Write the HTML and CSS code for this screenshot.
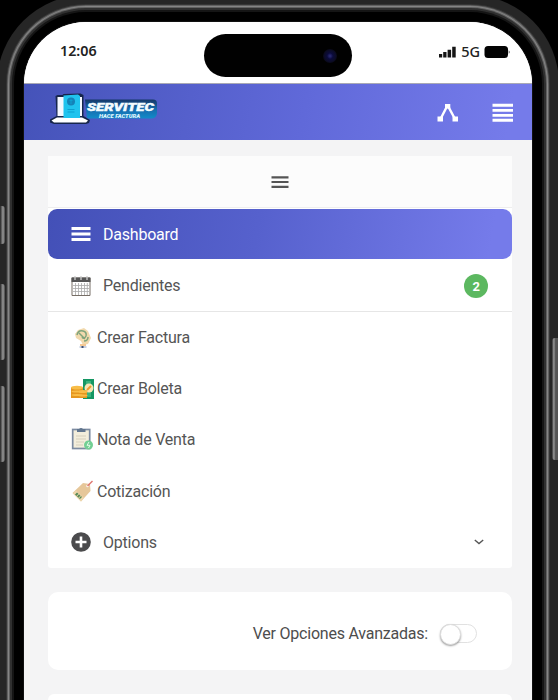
FILE: index.html
```html
<!DOCTYPE html>
<html lang="es">
<head>
<meta charset="utf-8">
<title>Servitec</title>
<link rel="stylesheet" href="styles.css">
</head>
<body>
<i class="key key-action"></i><i class="key key-up"></i><i class="key key-down"></i><i class="key key-power"></i>
<div class="screen">
  <div class="status">
    <span class="time">12:06</span>
    <div class="island"><i class="lens"></i></div>
    <div class="signal">
      <svg width="18" height="12" viewBox="0 0 18 12"><path d="M0 8h3.200v3.500H0zM4.200 6h3.300v5.500H4.200zM8.600 3.800h3.500v7.700H8.600zM13.200.8h3.500v10.700h-3.500z" fill="#151515"/></svg>
      <span class="net">5G</span>
      <svg width="27" height="14" viewBox="0 0 27 14"><rect x=".5" y="1" width="23.500" height="12" rx="3.500" fill="#030303"/><path d="M24.700 5.200q2 1.800 0 3.600z" fill="#444"/></svg>
    </div>
  </div>
  <header class="bar">
    <svg class="logo" width="112" height="36" viewBox="0 0 112 36">
      <defs><linearGradient id="plate" x1="0" y1="0" x2="0" y2="1"><stop offset="0" stop-color="#153768"/><stop offset=".5" stop-color="#176bad"/><stop offset="1" stop-color="#128bc9"/></linearGradient></defs>
      <path d="M34 8.500h68q4 0 4 4v9q0 6-6 6H36z" fill="url(#plate)"/>
      <path d="M4.500 5l2-1h5l1-1 17-.5 3 1.500V25l6.500 4-1 3-3 1H3l-4-1.500v-3L5.500 25z" fill="#17264c"/>
      <path d="M6.500 6H31v19H6.500z" fill="#f5f8ff"/>
      <path d="M.5 29.500L6 26.500h25l6 3-2 2H3z" fill="#fff"/>
      <path d="M12.500 4.500L27 3.500l2 1.500v22H12.500z" fill="#20c3ee"/>
      <circle cx="20" cy="10.500" r="4" fill="#1583b8"/><path d="M20 8v5M18.500 9.500h3M16.500 18.500h7M16.500 21h7" stroke="#0d9fd0" fill="none"/>
      <text class="brand" x="36" y="19.500" textLength="67" lengthAdjust="spacingAndGlyphs">SERVITEC</text>
      <text class="tag" x="48" y="27" textLength="41" lengthAdjust="spacingAndGlyphs">HACE FACTURA</text>
    </svg>
    <div class="tools">
      <svg width="24" height="22" viewBox="0 0 24 22"><path d="M4.500 17l6.200-12h1.800l6.500 12" fill="none" stroke="#fff" stroke-width="2.400"/><path d="M9 2h5.300v4.500H9zM1.500 14.500H7v5H1.500zM16.500 14.500H22v5h-5.500z" fill="#fff"/></svg>
      <svg width="22" height="22" viewBox="0 0 22 22"><path d="M.5 3.200h20.500M.5 8.400h20.500M.5 13.400h20.500M.5 18.300h20.500" stroke="#fff" stroke-width="2.900"/></svg>
    </div>
  </header>
  <main class="page">
    <nav class="menu">
      <div class="toggle"><svg width="18" height="14" viewBox="0 0 18 14"><path d="M.5 2.300h17M.5 7h17M.5 11.800h17" stroke="#555" stroke-width="2.200"/></svg></div>
      <a class="item active"><span class="ico"><svg width="20" height="16" viewBox="0 0 20 16"><path d="M.5 2.500h19M.5 8h19M.5 13.500h19" stroke="#fff" stroke-width="2.900"/></svg></span><span class="label wide">Dashboard</span></a>
      <a class="item pending"><span class="ico"><svg width="20" height="20" viewBox="0 0 20 20"><path d="M1 2h18v17.500H1z" fill="#fff" stroke="#776e66"/><path d="M.5 1.500h19V6H.5z" fill="#555"/><path d="M2 9.500h16M2 12.500h16M2 15.500h16M4.500 7v12M7.500 7v12M10.500 7v12M13.500 7v12M16.300 7v12" stroke="#aaa" stroke-width=".8"/><path d="M4 0v4M10 0v4M16 0v4" stroke="#ccc" stroke-width="1.300"/></svg></span><span class="label wide">Pendientes</span><b class="badge">2</b></a>
      <a class="item"><span class="ico"><svg width="22" height="22" viewBox="0 0 22 22"><path d="M4 7l3-4 6-2 4 3 3 7-3 6-5 1-2-4-5-3z" fill="#f1d9ad"/><path d="M6 8q1-5 6-4 4 1 3 5-2 4-4 1M8 6l6 6M13 14q4 0 4-4" fill="none" stroke="#7fa47c" stroke-width="1.500"/><path d="M9 17h6v2H9z" fill="#f6c994"/><path d="M8.500 19h7v2h-7z" fill="#c7d0e2"/><path d="M10.500 19h2v2h-2z" fill="#405070"/></svg></span><span class="label">Crear Factura</span></a>
      <a class="item"><span class="ico"><svg width="24" height="22" viewBox="0 0 24 22"><path d="M12 1h11v20H12z" fill="#159763"/><path d="M15 3h5v16h-5z" fill="#3bb27e"/><circle cx="18" cy="10" r="4.500" fill="#f6e5b5"/><path d="M16 12l4-4" stroke="#ef9c32" stroke-width="2"/><path d="M0 9.500h12v10.500H0zM9 12.500h7V20H9z" fill="#e5961f"/><g fill="#f8bd48"><ellipse cx="6" cy="9.700" rx="6" ry="1.900"/><ellipse cx="6" cy="13.500" rx="5.500" ry="1"/><ellipse cx="6" cy="17" rx="5.500" ry="1"/><ellipse cx="12" cy="13.500" rx="4.500" ry="1.500"/><ellipse cx="12" cy="17.500" rx="4.500" ry="1"/></g></svg></span><span class="label">Crear Boleta</span></a>
      <a class="item nota"><span class="ico"><svg width="23" height="24" viewBox="0 0 23 24"><rect x="1.700" y="2.500" width="17" height="19" fill="#f2eddb" stroke="#7c8ba1" stroke-width="1.700"/><path d="M6 2h2q2-2 4 0h2.500v3H6z" fill="#60758e"/><path d="M5 9h10M5 12h10M5 15h8M5 18h7" stroke="#d5cfbc"/><circle cx="17.500" cy="18" r="4.500" fill="#73cf94"/><path d="M18 15l-2 3.300h3L17.500 21" fill="none" stroke="#e5fbe9"/></svg></span><span class="label">Nota de Venta</span></a>
      <a class="item"><span class="ico"><svg width="23" height="23" viewBox="0 0 23 23"><path d="M1.500 13L12 3l7 1 .5 7L10 21.500z" fill="#e6c79a"/><path d="M2 13.500l3-3 8 7.500-3 3.500z" fill="#edd6ac"/><path d="M5 13.500l5 4.500" stroke="#588a57" stroke-width="3" stroke-dasharray="2 .7"/><circle cx="16.500" cy="6" r="1.200" fill="#fff"/><path d="M16.500 6l5-5" stroke="#df7771" stroke-width="1.500"/></svg></span><span class="label">Cotización</span></a>
      <a class="item options"><span class="ico"><svg width="20" height="20" viewBox="0 0 20 20"><circle cx="10" cy="10" r="9.800" fill="#4b4b4d"/><path d="M10 4.500v11M4.500 10h11" stroke="#fff" stroke-width="2.600"/></svg></span><span class="label wide">Options</span><svg class="chev" width="10" height="8" viewBox="0 0 10 8"><path d="M.8 2L5 5.500 9.200 2" fill="none" stroke="#555" stroke-width="1.400"/></svg></a>
    </nav>
    <section class="card advanced"><span>Ver Opciones Avanzadas:</span><i class="switch"></i></section>
    <section class="card next"></section>
  </main>
</div>
</body>
</html>
```
FILE: styles.css
```css
* { box-sizing: border-box; }
html, body { height: 700px; overflow: hidden; }
body { margin: 0; padding-top: 22px; background: #000; font-family: Roboto, "Liberation Sans", sans-serif; position: relative; }
.screen {
  width: 508px; height: 678px; margin-left: 24px; border-radius: 62px 62px 0 0; background: #f4f4f5;
  box-shadow: 0 0 0 1px #111, 0 0 0 10px #000, 0 0 0 12px #151515, 0 0 0 14px #303030, 0 0 0 15px #606060, 0 0 0 16px #858585, 0 0 0 17px #606060, 0 0 0 18px #353535, 0 0 0 27px #262626;
  overflow: hidden;
}
body::before { content: ""; position: absolute; z-index: -1; inset: 80px 0 0; background: #242424; }
.key { position: absolute; width: 5px; left: 0; background: linear-gradient(90deg, #222, #999 60%, #444); border-radius: 0 3px 3px 0; }
.key-action { top: 206px; height: 38px; }
.key-up { top: 284px; height: 76px; }
.key-down { top: 386px; height: 76px; }
.key-power { top: 338px; height: 122px; left: 552px; width: 6px; background: linear-gradient(90deg, #333, #999 30%, #555 60%); border-radius: 3px 0 0 3px; }

.status { height: 62px; background: #fff; border-bottom: 1px solid #a9a9b5; display: flex; justify-content: space-between; padding: 0 21px 0 36px; align-items: flex-start; }
.time { font: 600 14.300px/18px "Noto Sans", sans-serif; color: #222; width: 144px; padding-top: 20px; }
.island { width: 148px; height: 43px; margin-top: 12px; border-radius: 22px; background: #010101; display: flex; align-items: center; justify-content: flex-end; padding-right: 15px; }
.lens { width: 14px; height: 14px; border-radius: 50%; background: radial-gradient(circle, #25256a 0 8%, #0b0b3c 30%, #0c0c28 55%, #060608 85%); }
.signal { width: 159px; display: flex; justify-content: flex-end; align-items: center; padding-top: 20px; height: 39px; }
.net { font: 500 14.500px/18px "Noto Sans", sans-serif; color: #222; margin: -2px 4px 0 4px; }

.bar { height: 56px; background: linear-gradient(100deg, #4553b9, #6069d9 55%, #757bea 95%); display: flex; justify-content: space-between; align-items: flex-start; padding: 7px 18px 0 27px; }
.logo { overflow: visible; }
.brand { font: italic 900 11px Roboto, sans-serif; fill: #f4fcff; stroke: #f4fcff; stroke-width: .4; }
.tag { font: italic 900 4.500px Roboto, sans-serif; fill: #e4f8ff; }
.tools { display: flex; gap: 32px; padding-top: 11px; }

.page { padding: 16px 20px 0 24px; }
.menu { background: #fff; height: 412px; border-radius: 3px; }
.toggle { height: 52px; background: #fcfcfc; border-bottom: 1px solid #eee; display: flex; align-items: center; justify-content: center; }
.item { height: 51.300px; display: flex; align-items: center; padding: 0 23px; color: #555; font-size: 16px; letter-spacing: -.22px; }
.ico { width: 26px; display: flex; }
.wide { margin-left: 6px; }
.active { height: 50px; margin-top: 1px; color: #fff; border-radius: 9px; background: linear-gradient(100deg, #4350b7, #5661cd 45%, #757bea 95%); }
.pending { height: 53px; padding-top: 1px; border-bottom: 1px solid #e6e6e6; }
.nota { padding-bottom: 2px; }
.options { padding-bottom: 1px; }
.badge { margin-left: auto; margin-right: 1px; width: 24px; height: 24px; border-radius: 50%; background: #5cb860; color: #fff; font-size: 13px; line-height: 25px; text-align: center; }
.chev { margin-left: auto; margin-right: 5px; }
.card { background: #fff; border-radius: 10px; }
.advanced { height: 78px; margin-top: 24px; display: flex; align-items: center; justify-content: flex-end; gap: 12px; padding: 5px 35px 0 0; color: #4d4d4d; font-size: 16px; letter-spacing: -.22px; }
.switch { width: 37px; height: 19px; border: 1px solid #e1e1e1; border-radius: 10px; display: block; }
.switch::before { content: ""; display: block; width: 19px; height: 19px; margin: -1px; border-radius: 50%; background: #fff; border: 1px solid #ddd; box-shadow: 0 1px 2px #999; }
.next { height: 6px; margin-top: 24px; border-radius: 10px 10px 0 0; }
```
